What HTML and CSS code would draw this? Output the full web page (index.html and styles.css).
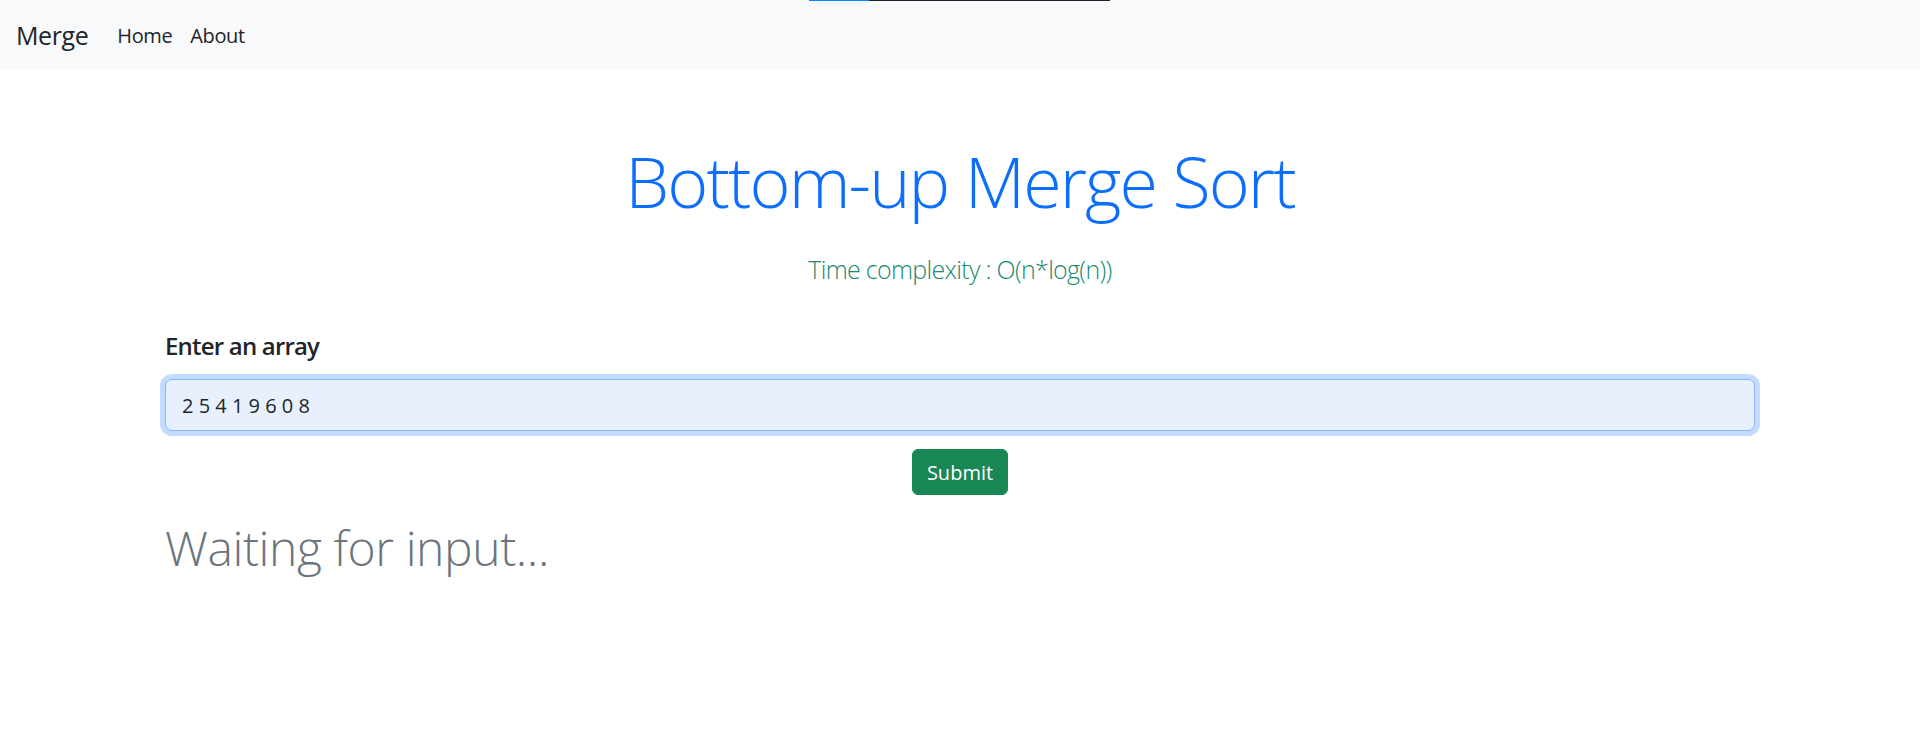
FILE: index.html
```html
<!DOCTYPE html>
<html lang="en">
<head>
<meta charset="utf-8">
<title>Merge</title>
<link rel="stylesheet" href="styles.css">
</head>
<body>
<div class="top-line"><span class="top-line-blue"></span><span class="top-line-dark"></span></div>
<nav class="navbar">
  <a class="brand" href="#">Merge</a>
  <ul class="nav">
    <li><a class="nav-link" href="#">Home</a></li>
    <li><a class="nav-link" href="#">About</a></li>
  </ul>
</nav>
<main class="container">
  <h1 class="title">Bottom-up Merge Sort</h1>
  <p class="lead">Time complexity : O(n*log(n))</p>
  <form class="array-form">
    <label class="form-label" for="arr">Enter an array</label>
    <input class="form-control" id="arr" type="text" value="2 5 4 1 9 6 0 8">
    <div class="actions"><button class="btn" type="button">Submit</button></div>
  </form>
  <h2 class="waiting">Waiting for input...</h2>
</main>
</body>
</html>
```
FILE: styles.css
```css
* { box-sizing: border-box; }
html, body { margin: 0; padding: 0; }
body {
  font-family: "Open Sans", "Noto Sans", sans-serif;
  font-size: 20px;
  color: #212529;
  background: #fff;
}
.top-line {
  position: absolute;
  top: 0;
  left: 809px;
  display: flex;
  height: 1px;
}
.top-line-blue { width: 60px; background: #0a84ff; }
.top-line-dark { width: 241px; background: #1f2327; }
.navbar {
  height: 70px;
  background: #f8f9fa;
  display: flex;
  align-items: center;
  padding: 0 16px;
}
.brand {
  font-size: 25px;
  letter-spacing: -0.4px;
  color: #212529;
  text-decoration: none;
  margin-right: 20px;
}
.nav {
  list-style: none;
  display: flex;
  margin: 0;
  padding: 0;
}
.nav-link {
  display: block;
  padding: 0 9px;
  color: #212529;
  text-decoration: none;
  font-size: 20px;
  letter-spacing: -0.4px;
}
.container {
  width: 1590px;
  margin: 0 auto;
}
.title {
  margin: 69px 0 0;
  text-align: center;
  font-size: 70px;
  font-weight: 300;
  letter-spacing: -1.9px;
  line-height: 1.2;
  color: #0d6efd;
}
.lead {
  margin: 28px 0 0;
  text-align: center;
  font-size: 25px;
  font-weight: 300;
  letter-spacing: -0.7px;
  line-height: 1.5;
  color: #1c8a70;
}
.array-form {
  margin-top: 43px;
}
.form-label {
  display: block;
  font-size: 24px;
  font-weight: 600;
  letter-spacing: -0.8px;
  line-height: 1.2;
  margin-bottom: 19px;
}
.form-control {
  display: block;
  width: 100%;
  height: 52px;
  padding: 0 16px;
  font-family: inherit;
  font-size: 20px;
  color: #212529;
  background: #e8f0fe;
  border: 1px solid #86b7fe;
  border-radius: 7px;
  box-shadow: 0 0 0 5px #c2dbfe;
  outline: none;
}
.actions {
  display: flex;
  justify-content: center;
  margin-top: 18px;
}
.btn {
  width: 96px;
  height: 46px;
  font-family: inherit;
  font-size: 20px;
  color: #fff;
  background: #198754;
  border: 1px solid #198754;
  border-radius: 6px;
  padding: 0;
}
.waiting {
  margin: 24px 0 0;
  font-size: 48px;
  font-weight: 300;
  letter-spacing: -0.4px;
  line-height: 1.2;
  color: #6c757d;
}
```
